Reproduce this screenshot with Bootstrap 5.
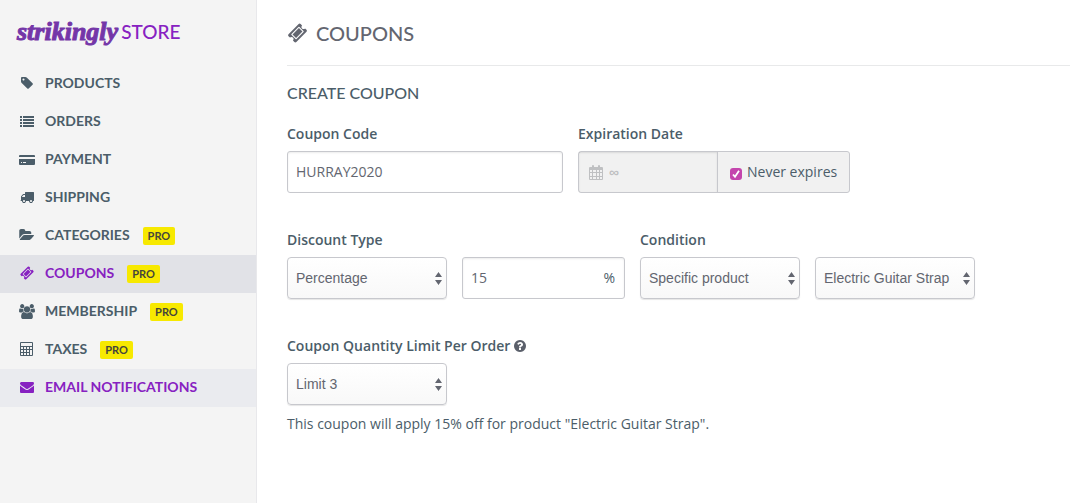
<!DOCTYPE html>
<html lang="en">
<head>
<meta charset="utf-8">
<meta name="viewport" content="width=device-width, initial-scale=1">
<title>Store – Coupons</title>
<link rel="stylesheet" href="https://cdn.jsdelivr.net/npm/bootstrap@5.3.0/dist/css/bootstrap.min.css">
<style>
  :root { --ink: #4b5d69; --grey: #636670; --purple: #8721c1; --line: #c7c8cd; }
  body { font-family: "Open Sans", sans-serif; font-size: 14px; line-height: 20px; color: var(--ink); }
  svg { fill: currentColor; flex: none; }

  /* sidebar */
  .sidebar { width: 257px; background: #f4f4f4; border-right: 1px solid #e8e8eb; }
  .brand { height: 65px; color: var(--purple); padding: 0 0 2px 17px; gap: 3px; font-family: Lato, sans-serif; font-weight: 500; font-size: 19px; line-height: 24px; }
  .brand:hover { color: var(--purple); }
  .brand-script { font-family: "Liberation Serif", serif; font-weight: 700; font-style: italic; font-size: 26px; color: #7436a8; -webkit-text-stroke: 1px #7436a8; }
  .side-link { height: 38px; padding: 0 19px 2px; gap: 10px; color: var(--ink); font-family: Lato, sans-serif; font-weight: 700; font-size: 14px; }
  .side-link:hover, .side-link.lit { color: var(--purple); background: #eaebef; }
  .side-link.active { color: var(--purple); background: #e1e2e7; }
  .pro { background: #f7e900; color: #45453c; font-size: 11px; line-height: 18px; padding: 0 5px; margin: 2px 0 0 3px; border-radius: 2px; }

  /* content */
  .content { padding-left: 30px; }
  .page-title { height: 66px; border-bottom: 1px solid #e8e9ea; color: var(--grey); }
  h1, h2 { font-family: Lato, sans-serif; font-weight: 500; }
  h1 { font-size: 20px; line-height: 24px; }
  h2 { font-size: 16px; line-height: 24px; margin: 15px 0 19px; }
  .fields { gap: 15px; margin-bottom: 37px; }
  .label-text { display: block; font-weight: 600; margin-bottom: 7px; }
  .field { height: 42px; padding: 0 8px; font-size: 14px; color: var(--grey); border: 1px solid var(--line); border-radius: 3px; box-shadow: inset 0 1px 2px rgba(0,0,0,.08); }
  input.field { padding-bottom: 2px; }
  .w-code { width: 276px; }
  .w-date { width: 272px; }
  .w-pick { width: 160px; }
  .w-amount { width: 163px; }
  .picker { appearance: none; font-family: "Liberation Sans", sans-serif; border-radius: 4px; box-shadow: 0 1px 1px rgba(0,0,0,.1);
    background: url("data:image/svg+xml,%3Csvg xmlns='http://www.w3.org/2000/svg' viewBox='0 0 7 13'%3E%3Cpath fill='%23636670' d='M3.500 0L7 5H0zM3.500 13L7 8H0z'/%3E%3C/svg%3E") no-repeat right 4px center / 7px 13px, linear-gradient(#fff, #f8f8f8); }
  .joined { height: 42px; border: 1px solid var(--line); border-radius: 3px; background: #f1f1f1; }
  .date-box { width: 139px; padding-left: 10px; gap: 6px; color: #bfc0c2; border-right: 1px solid var(--line); box-shadow: inset 0 1px 2px rgba(0,0,0,.1); }
  .date-box input { color: inherit; min-width: 0; font-family: "Liberation Sans", sans-serif; font-weight: 700; }
  .never { padding-left: 12px; gap: 5px; }
  .tick { appearance: none; width: 12px; height: 12px; margin-top: 4px; border-radius: 3px;
    background: #c445ad url("data:image/svg+xml,%3Csvg xmlns='http://www.w3.org/2000/svg' viewBox='0 0 12 12'%3E%3Cpath fill='none' stroke='white' stroke-width='1.800' d='M3 6.500l2 2.300 4-6'/%3E%3C/svg%3E"); }
  .amount input { padding-right: 30px; }
  .unit { right: 10px; top: 11px; }
  .help { color: #5b606b; }
  .summary { margin: 9px 0 0; }
</style>
</head>
<body>
<div class="d-flex min-vh-100">
  <nav class="sidebar flex-shrink-0" aria-label="Store">
    <a class="brand d-flex align-items-center text-decoration-none" href="#"><span class="brand-script">strikingly</span><span>STORE</span></a>
    <div class="d-flex flex-column">
      <a class="side-link d-flex align-items-center text-decoration-none" href="#"><svg width="16" height="14" viewBox="0 0 1792 1792"><path d="M576 448q0-53-37.500-90.500t-90.500-37.500-90.500 37.500-37.500 90.500 37.500 90.500 90.500 37.500 90.500-37.500 37.500-90.500zm1067 576q0 53-37 90l-491 492q-39 37-91 37-53 0-90-37l-715-716q-38-37-64.500-101t-26.500-117v-416q0-52 38-90t90-38h416q53 0 117 26.500t102 64.500l715 714q37 39 37 91z"/></svg>PRODUCTS</a>
      <a class="side-link d-flex align-items-center text-decoration-none" href="#"><svg width="16" height="14" viewBox="0 0 16 14"><path d="M1 2h2v2H1zM4 2h11v2H4zM1 5h2v2H1zM4 5h11v2H4zM1 8h2v2H1zM4 8h11v2H4zM1 11h2v2H1zM4 11h11v2H4z"/></svg>ORDERS</a>
      <a class="side-link d-flex align-items-center text-decoration-none" href="#"><svg width="16" height="14" viewBox="0 0 16 14"><path d="M1 3h14q1 0 1 1v1H0V4q0-1 1-1zM0 7h16v5q0 1-1 1H1q-1 0-1-1zM2 10v1h1v-1zM4 10v1h3v-1z" fill-rule="evenodd"/></svg>PAYMENT</a>
      <a class="side-link d-flex align-items-center text-decoration-none" href="#"><svg width="16" height="14" viewBox="0 0 1792 1792"><path d="M640 1408q0-52-38-90t-90-38-90 38-38 90 38 90 90 38 90-38 38-90zm-384-512h384v-256h-158q-13 0-22 9l-195 195q-9 9-9 22v30zm1280 512q0-52-38-90t-90-38-90 38-38 90 38 90 90 38 90-38 38-90zm256-1088v1024q0 15-4 26.500t-13.500 18.500-16.500 11.500-23.500 6-22.500 2-25.500 0-22.500-.5q0 106-75 181t-181 75-181-75-75-181h-384q0 106-75 181t-181 75-181-75-75-181h-64q-3 0-22.500.5t-25.500 0-22.500-2-23.500-6-16.500-11.500-13.500-18.500-4-26.500q0-26 19-45t45-19v-320q0-8-.5-35t0-38 2.500-34.500 6.500-37 14-30.500 22.500-30l198-198q19-19 50.500-32t58.500-13h160v-192q0-26 19-45t45-19h1024q26 0 45 19t19 45z"/></svg>SHIPPING</a>
      <a class="side-link d-flex align-items-center text-decoration-none" href="#"><svg width="16" height="14" viewBox="0 0 1856 1792"><path d="M1815 952q0 31-31 66l-336 396q-43 51-120.500 86.500t-143.500 35.500h-1088q-34 0-60.500-13t-26.500-43q0-31 31-66l336-396q43-51 120.500-86.500t143.500-35.500h1088q34 0 60.500 13t26.500 43zm-343-344v160h-832q-94 0-197 47.500t-164 119.500l-337 396-5 6q0-4-.5-12.500t-.5-12.500v-960q0-92 66-158t158-66h320q92 0 158 66t66 158v32h544q92 0 158 66t66 158z"/></svg>CATEGORIES<span class="pro">PRO</span></a>
      <a class="side-link active d-flex align-items-center text-decoration-none" href="#" aria-current="page"><svg width="16" height="14" viewBox="0 0 1792 1792"><path id="ticket" d="M1024 452l316 316-572 572-316-316zm-211 979l618-618q19-19 19-45t-19-45l-362-362q-18-18-45-18t-45 18l-618 618q-19 19-19 45t19 45l362 362q18 18 45 18t45-18zm889-637l-907 908q-37 37-90.500 37t-90.500-37l-126-126q56-56 56-136t-56-136-136-56-136 56l-125-126q-37-37-37-90.500t37-90.500l907-906q37-37 90.500-37t90.500 37l125 125q-56 56-56 136t56 136 136 56 136-56l126 125q37 37 37 90.500t-37 90.500z"/></svg>COUPONS<span class="pro">PRO</span></a>
      <a class="side-link d-flex align-items-center text-decoration-none" href="#"><svg width="16" height="15" viewBox="0 0 1920 1792"><path d="M593 896q-162 5-265 128h-134q-82 0-138-40.500t-56-118.500q0-353 124-353 6 0 43.500 21t97.500 42.500 119 21.500q67 0 133-23-5 37-5 66 0 139 81 256zm1071 637q0 120-73 189.500t-194 69.500h-874q-121 0-194-69.500t-73-189.500q0-53 3.500-103.500t14-109 26.500-108.500 43-97.500 62-81 85.500-53.500 111.500-20q10 0 43 21.500t73 48 107 48 135 21.500 135-21.500 107-48 73-48 43-21.500q61 0 111.500 20t85.500 53.500 62 81 43 97.500 26.500 108.500 14 109 3.500 103.500zm-1024-1277q0 106-75 181t-181 75-181-75-75-181 75-181 181-75 181 75 75 181zm704 384q0 159-112.500 271.500t-271.500 112.500-271.500-112.500-112.500-271.500 112.500-271.500 271.500-112.500 271.500 112.500 112.500 271.500zm576 225q0 78-56 118.500t-138 40.500h-134q-103-123-265-128 81-117 81-256 0-29-5-66 66 23 133 23 59 0 119-21.500t97.500-42.500 43.500-21q124 0 124 353zm-128-609q0 106-75 181t-181 75-181-75-75-181 75-181 181-75 181 75 75 181z"/></svg>MEMBERSHIP<span class="pro">PRO</span></a>
      <a class="side-link d-flex align-items-center text-decoration-none" href="#"><svg width="16" height="14" viewBox="0 0 16 14"><path fill-rule="evenodd" d="M2 0h11q1 0 1 1v12q0 1-1 1H2q-1 0-1-1V1q0-1 1-1zM2 1v3h11V1zM2 5v2h2V5zM5 5v2h2V5zM8 5v2h2V5zM11 5v2h2V5zM2 8v2h2V8zM5 8v2h2V8zM8 8v2h2V8zM2 11v2h2v-2zM5 11v2h2v-2zM8 11v2h2v-2zM11 8v5h2V8z"/></svg>TAXES<span class="pro">PRO</span></a>
      <a class="side-link lit d-flex align-items-center text-decoration-none" href="#"><svg width="16" height="14" viewBox="0 0 1792 1792"><path d="M1792 710v794q0 66-47 113t-113 47h-1472q-66 0-113-47t-47-113v-794q44 49 101 87 362 246 497 345 57 42 92.500 65.500t94.500 48 110 24.500h2q51 0 110-24.500t94.500-48 92.500-65.500q170-123 498-345 57-39 100-87zm0-294q0 79-49 151t-122 123q-376 261-468 325-10 7-42.500 31t-54 38.500-52 32.500-57.500 27-50 9h-2q-23 0-50-9t-57.500-27-52-32.500-54-38.500-42.500-31q-91-64-262-182.500t-205-142.500q-62-42-117-115.500t-55-136.500q0-78 41.500-130t118.500-52h1472q65 0 112.500 47t47.500 113z"/></svg>EMAIL NOTIFICATIONS</a>
    </div>
  </nav>

  <main class="content flex-grow-1">
    <header class="page-title d-flex align-items-center gap-2">
      <svg width="21" height="20" viewBox="0 0 1792 1792"><use href="#ticket"/></svg>
      <h1 class="m-0">COUPONS</h1>
    </header>
    <form>
      <h2>CREATE COUPON</h2>
      <div class="fields d-flex flex-wrap">
        <div class="w-code">
          <label class="label-text" for="code">Coupon Code</label>
          <input class="field w-100" id="code" type="text" value="HURRAY2020">
        </div>
        <div class="w-date">
          <label class="label-text" for="expires">Expiration Date</label>
          <div class="joined d-flex">
            <div class="date-box d-flex align-items-center">
              <svg width="14" height="15" viewBox="0 0 14 15"><path fill-rule="evenodd" d="M1 2h2V1q0-1 1-1t1 1v1h4V1q0-1 1-1t1 1v1h2q1 0 1 1v11q0 1-1 1H1q-1 0-1-1V3q0-1 1-1zM1 5v2h2V5zM4 5v2h3V5zM8 5v2h2V5zM11 5v2h2V5zM1 8v3h2V8zM4 8v3h3V8zM8 8v3h2V8zM11 8v3h2V8zM1 12v2h2v-2zM4 12v2h3v-2zM8 12v2h2v-2zM11 12v2h2v-2z"/></svg>
              <input class="border-0 bg-transparent p-0 w-100" id="expires" type="text" value="∞" disabled>
            </div>
            <div class="never d-flex align-items-center">
              <input class="tick" id="never" type="checkbox" checked>
              <label for="never">Never expires</label>
            </div>
          </div>
        </div>
      </div>

      <div class="fields d-flex flex-wrap">
        <div>
          <label class="label-text" for="type">Discount Type</label>
          <div class="d-flex fields mb-0">
            <select class="field picker w-pick" id="type"><option>Percentage</option></select>
            <div class="amount w-amount position-relative">
              <input class="field w-100" type="text" value="15" aria-label="Discount amount">
              <span class="unit position-absolute">%</span>
            </div>
          </div>
        </div>
        <div>
          <label class="label-text" for="condition">Condition</label>
          <div class="d-flex fields mb-0">
            <select class="field picker w-pick" id="condition"><option>Specific product</option></select>
            <select class="field picker w-pick" aria-label="Product"><option>Electric Guitar Strap</option></select>
          </div>
        </div>
      </div>

      <label class="label-text d-flex align-items-center gap-1" for="limit">Coupon Quantity Limit Per Order
        <svg class="help" width="12" height="12" viewBox="128 128 1536 1536"><path d="M1024 1376v-192q0-14-9-23t-23-9h-192q-14 0-23 9t-9 23v192q0 14 9 23t23 9h192q14 0 23-9t9-23zm256-672q0-88-55.500-163t-138.500-116-170-41q-243 0-371 213-15 24 8 42l132 100q7 6 19 6 16 0 25-12 53-68 86-92 34-24 86-24 48 0 85.500 26t37.500 59q0 38-20 61t-68 45q-63 28-115.500 86.500t-52.500 125.500v36q0 14 9 23t23 9h192q14 0 23-9t9-23q0-19 21.500-49.500t54.500-49.500q32-18 49-28.500t46-35 44.500-48 28-60.500 12.500-81zm384 192q0 209-103 385.500t-279.500 279.500-385.500 103-385.500-103-279.500-279.500-103-385.500 103-385.500 279.500-279.500 385.500-103 385.500 103 279.500 279.500 103 385.500z"/></svg>
      </label>
      <select class="field picker w-pick d-block" id="limit"><option>Limit 3</option></select>
      <p class="summary">This coupon will apply 15% off for product "Electric Guitar Strap".</p>
    </form>
  </main>
</div>
<script src="https://cdn.jsdelivr.net/npm/bootstrap@5.3.0/dist/js/bootstrap.bundle.min.js"></script>
</body>
</html>
